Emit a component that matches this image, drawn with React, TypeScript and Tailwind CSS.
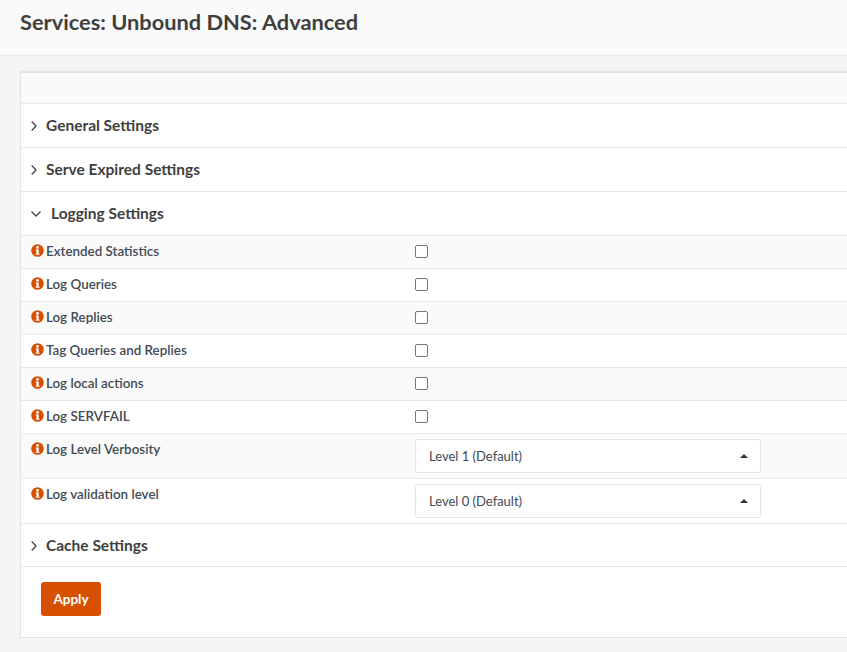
import React from 'react';

const font = "font-['Lato','Noto_Sans',sans-serif]";

const InfoIcon = () => (
    <svg viewBox="0 0 13 13" className="w-[13px] h-[13px] mt-[2px] shrink-0">
        <circle cx="6.5" cy="6.5" r="6.3" fill="#d94f00" />
        <circle cx="6.5" cy="3.4" r="1.4" fill="#fff" />
        <path d="M4.8 5.6h2.9v4.1h.9v1.1H4.6V9.7h.9V6.7h-.7z" fill="#fff" />
    </svg>
);

const Section = ({ title, open, short }: { title: string; open?: boolean; short?: boolean }) => (
    <div className={`${short ? 'h-[43px] pt-[1px]' : 'h-11'} flex items-center border-b border-[#e8e8e8] pl-[10px] text-[15.5px] font-bold text-[#3f3f3f]`}>
        {open ? (
            <svg viewBox="0 0 10 6" className="w-[10px] h-[6px] mr-[10px]" fill="none" stroke="#444" strokeWidth="1.3">
                <polyline points="0.5,0.5 5,5 9.5,0.5" />
            </svg>
        ) : (
            <svg viewBox="0 0 6 10" className="w-[6px] h-[10px] mr-[9px]" fill="none" stroke="#444" strokeWidth="1.3">
                <polyline points="0.7,0.5 5,5 0.7,9.5" />
            </svg>
        )}
        <span>{title}</span>
    </div>
);

const Label = ({ text }: { text: string }) => (
    <div className="w-[394px] pl-[10px] flex items-start gap-[2px] text-[13.4px] font-semibold text-[#424a55]">
        <InfoIcon />
        <span className="leading-[18px]">{text}</span>
    </div>
);

const CheckRow = ({ text, alt }: { text: string; alt?: boolean }) => (
    <div className={`h-[33px] flex items-center pb-[2px] border-b border-[#e8e8e8] ${alt ? 'bg-[#fafafa]' : 'bg-white'}`}>
        <Label text={text} />
        <span className="w-[13px] h-[13px] rounded-[2px] border border-[#767676] bg-white" />
    </div>
);

const SelectRow = ({ text, value, alt }: { text: string; value: string; alt?: boolean }) => (
    <div className={`h-[45px] flex items-start pt-[5px] border-b border-[#e8e8e8] ${alt ? 'bg-[#fafafa]' : 'bg-white'}`}>
        <div className="pt-[1px]"><Label text={text} /></div>
        <div className="w-[346px] h-[34px] flex items-center justify-between pl-[13px] pr-[12px] bg-white border border-[#e5e5e5] rounded-[3px] text-[13px] text-[#424a55]">
            <span className="pt-[2px]">{value}</span>
            <span className="w-0 h-0 border-x-[4px] border-x-transparent border-b-[4px] border-b-[#333]" />
        </div>
    </div>
);

export default function App() {
    return (
        <div className={`w-[847px] h-[652px] overflow-hidden bg-[#f5f5f5] ${font}`}>
            <div className="h-[56px] bg-[#fafafa] border-b border-[#e8e8e8] pl-5 pt-[6px]">
                <h1 className="text-[21.8px] leading-[32px] font-bold text-[#3f3f3f]">Services: Unbound DNS: Advanced</h1>
            </div>
            <div className="ml-5 mt-[15px] w-[900px] h-[567px] bg-white border border-[#e3e3e3] border-t-2">
                <div className="h-[31px] bg-[#fafafa] border-b border-[#e8e8e8]" />
                <Section title="General Settings" />
                <Section title="Serve Expired Settings" />
                <Section title="Logging Settings" open />
                <CheckRow text="Extended Statistics" alt />
                <CheckRow text="Log Queries" />
                <CheckRow text="Log Replies" alt />
                <CheckRow text="Tag Queries and Replies" />
                <CheckRow text="Log local actions" alt />
                <CheckRow text="Log SERVFAIL" />
                <SelectRow text="Log Level Verbosity" value="Level 1 (Default)" alt />
                <SelectRow text="Log validation level" value="Level 0 (Default)" />
                <Section title="Cache Settings" short />
                <div className="pl-5 pt-[15px]">
                    <button className="w-[60px] h-[34px] bg-[#d94f00] rounded-[3px] text-white text-[13.5px] font-bold">Apply</button>
                </div>
            </div>
        </div>
    );
}
